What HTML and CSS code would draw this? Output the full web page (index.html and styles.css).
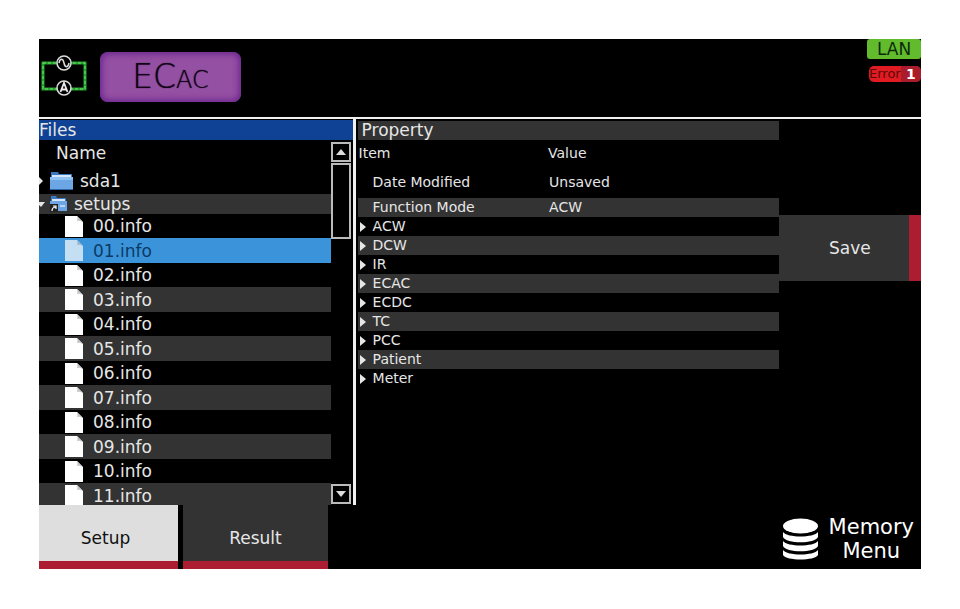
FILE: index.html
```
<!DOCTYPE html>
<html lang="en">
<head>
  <meta charset="UTF-8">
  <meta name="viewport" content="width=device-width, initial-scale=1.0">
  <title>Memory Menu</title>
  <link rel="stylesheet" href="styles.css">
</head>
<body>
  <!-- shared icons -->
  <svg class="defs" width="0" height="0" aria-hidden="true">
    <symbol id="file" viewBox="0 0 18 21">
      <path d="M0 0h12l6 6v15H0z" fill="#fff"/>
      <path d="M12 0c1 3 0 5 0 5s3-1 6 1z" fill="#c4c4c4"/>
    </symbol>
    <symbol id="right" viewBox="0 0 6 10">
      <path d="M0 0l6 5-6 5z" fill="#e6e6e6"/>
    </symbol>
  </svg>

  <div class="screen">
    <header class="topbar">
      <svg class="circuit" width="46" height="44" viewBox="0 0 46 44">
        <rect x="2" y="10" width="42" height="26" fill="none" stroke="#22a52c" stroke-width="3"/>
        <rect x="2" y="10" width="42" height="26" fill="none" stroke="#7be070" stroke-width="1" stroke-dasharray="3 2"/>
        <circle cx="23" cy="10" r="7" fill="#000" stroke="#ddd" stroke-width="1.5"/>
        <path d="M18 10c1-5 4-5 5 0s4 5 5 0" fill="none" stroke="#ddd" stroke-width="1.5"/>
        <circle cx="23" cy="35" r="7" fill="#000" stroke="#ddd" stroke-width="1.5"/>
        <path d="M19.500 39l3.500-9 3.500 9M21 36.500h4" fill="none" stroke="#eee" stroke-width="1.800"/>
      </svg>
      <h1 class="mode">EC<span class="mode-sub">AC</span></h1>
      <div class="status">
        <span class="lan">LAN</span>
        <span class="error">Error<b class="error-count">1</b></span>
      </div>
    </header>

    <main class="content">
      <section class="files">
        <h2 class="files-title">Files</h2>
        <div class="files-body">
          <div class="tree">
            <div class="tree-head">Name</div>
            <div class="folder">
              <svg width="4" height="10" viewBox="0 0 4 10"><path d="M0 1l4 4-4 4z" fill="#e6e6e6"/></svg>
              <svg width="23" height="20" viewBox="0 0 23 20">
                <path d="M1 1h7l1 2h13v5H1z" fill="#3c76bd"/>
                <path d="M2 4h19v2H2z" fill="#d4e6f8"/>
                <path d="M0 6h23v13H0z" fill="#6ca6e4"/>
                <path d="M0 6h23v3H0z" fill="#8fc0f2"/>
                <path d="M0 18h23v1H0z" fill="#2f68ad"/>
              </svg>
              <span>sda1</span>
            </div>
            <div class="folder folder-open">
              <svg class="folder-caret" width="6" height="7" viewBox="0 0 6 7"><path d="M0 1h6l-4 5-2-2z" fill="#e6e6e6"/></svg>
              <svg width="17" height="16" viewBox="0 0 17 16">
                <path d="M1 0h5l1 2h9v3H1z" fill="#3c76bd"/>
                <path d="M2 3h13v2H2z" fill="#d4e6f8"/>
                <path d="M0 5h17v10H0z" fill="#6ca6e4"/>
                <path d="M0 8h8v8H0z" fill="#222"/>
                <path d="M2 15c0-3 1-4 4-4M3 10h3v3" fill="none" stroke="#fff" stroke-width="1.200"/>
                <path d="M10 9h5v2h-5z" fill="#b5d6f7"/>
              </svg>
              <span>setups</span>
            </div>
            <ul class="file-list">
              <li><button class="file"><svg width="18" height="21"><use href="#file"/></svg>00.info</button></li>
              <li><button class="file selected"><svg width="18" height="21"><use href="#file"/></svg>01.info</button></li>
              <li><button class="file"><svg width="18" height="21"><use href="#file"/></svg>02.info</button></li>
              <li><button class="file"><svg width="18" height="21"><use href="#file"/></svg>03.info</button></li>
              <li><button class="file"><svg width="18" height="21"><use href="#file"/></svg>04.info</button></li>
              <li><button class="file"><svg width="18" height="21"><use href="#file"/></svg>05.info</button></li>
              <li><button class="file"><svg width="18" height="21"><use href="#file"/></svg>06.info</button></li>
              <li><button class="file"><svg width="18" height="21"><use href="#file"/></svg>07.info</button></li>
              <li><button class="file"><svg width="18" height="21"><use href="#file"/></svg>08.info</button></li>
              <li><button class="file"><svg width="18" height="21"><use href="#file"/></svg>09.info</button></li>
              <li><button class="file"><svg width="18" height="21"><use href="#file"/></svg>10.info</button></li>
              <li><button class="file"><svg width="18" height="21"><use href="#file"/></svg>11.info</button></li>
            </ul>
          </div>
          <div class="scrollbar">
            <button class="scroll-btn" aria-label="Scroll up"><svg width="10" height="6" viewBox="0 0 10 6"><path d="M0 6l5-6 5 6z" fill="#ddd"/></svg></button>
            <div class="scroll-thumb"></div>
            <button class="scroll-btn scroll-down" aria-label="Scroll down"><svg width="10" height="6" viewBox="0 0 10 6"><path d="M0 0h10L5 6z" fill="#ddd"/></svg></button>
          </div>
        </div>
      </section>

      <section class="property">
        <h2 class="property-title">Property</h2>
        <table class="property-table">
          <thead>
            <tr><th class="item">Item</th><th>Value</th></tr>
          </thead>
          <tbody>
            <tr class="first"><td class="leaf">Date Modified</td><td>Unsaved</td></tr>
            <tr><td class="leaf">Function Mode</td><td>ACW</td></tr>
            <tr><td colspan="2"><button class="group"><svg width="6" height="10"><use href="#right"/></svg>ACW</button></td></tr>
            <tr><td colspan="2"><button class="group"><svg width="6" height="10"><use href="#right"/></svg>DCW</button></td></tr>
            <tr><td colspan="2"><button class="group"><svg width="6" height="10"><use href="#right"/></svg>IR</button></td></tr>
            <tr><td colspan="2"><button class="group"><svg width="6" height="10"><use href="#right"/></svg>ECAC</button></td></tr>
            <tr><td colspan="2"><button class="group"><svg width="6" height="10"><use href="#right"/></svg>ECDC</button></td></tr>
            <tr><td colspan="2"><button class="group"><svg width="6" height="10"><use href="#right"/></svg>TC</button></td></tr>
            <tr><td colspan="2"><button class="group"><svg width="6" height="10"><use href="#right"/></svg>PCC</button></td></tr>
            <tr><td colspan="2"><button class="group"><svg width="6" height="10"><use href="#right"/></svg>Patient</button></td></tr>
            <tr><td colspan="2"><button class="group"><svg width="6" height="10"><use href="#right"/></svg>Meter</button></td></tr>
          </tbody>
        </table>
      </section>

      <aside class="actions">
        <button class="save">Save</button>
      </aside>
    </main>

    <footer class="bottombar">
      <button class="tab active">Setup</button>
      <button class="tab">Result</button>
      <div class="menu-name">
        <svg width="35" height="42" viewBox="0 0 35 42">
          <g fill="#fff">
            <ellipse cx="17.500" cy="8" rx="17.500" ry="7.500"/>
            <path d="M0 14c4 6 31 6 35 0v5c-3 7-32 7-35 0z"/>
            <path d="M0 23c4 6 31 6 35 0v5c-3 7-32 7-35 0z"/>
            <path d="M0 32c4 6 31 6 35 0v5c-3 6-32 6-35 0z"/>
          </g>
        </svg>
        <span>Memory<br>Menu</span>
      </div>
    </footer>
  </div>
</body>
</html>
```
FILE: styles.css
```
* {
  box-sizing: border-box;
}

body {
  margin: 0;
  padding: 39px 39px 40px;
  height: 100vh;
  background-color: #fff;
  color: #e6e6e6;
  font-family: 'DejaVu Sans', sans-serif;
  font-size: 17px;
}

h1, h2, ul {
  margin: 0;
  padding: 0;
  font-weight: normal;
}

button {
  margin: 0;
  padding: 0;
  border: none;
  background: none;
  color: inherit;
  font: inherit;
  cursor: pointer;
}

.defs {
  display: none;
}

.screen {
  display: flex;
  flex-direction: column;
  height: 100%;
  background-color: #000;
  overflow: hidden;
}

/* top bar */
.topbar {
  display: flex;
  align-items: flex-start;
  height: 80px;
  border-bottom: 2px solid #f0f0f0;
}

.circuit {
  margin: 14px 13px 0 2px;
}

.mode {
  width: 141px;
  height: 50px;
  margin-top: 13px;
  border-radius: 8px;
  background-color: #9450a2;
  box-shadow: inset 0 0 6px 2px #6a2390;
  color: #120418;
  font-size: 33px;
  font-weight: 200;
  line-height: 50px;
  text-align: center;
  text-shadow: 0 0 1px #120418;
}

.mode-sub {
  font-size: 24px;
}

.status {
  display: flex;
  flex-direction: column;
  align-items: flex-end;
  gap: 7px;
  margin-left: auto;
}

.lan {
  width: 54px;
  border-radius: 3px;
  background-color: #62bb2c;
  color: #0c2a0a;
  line-height: 20px;
  text-align: center;
}

.error {
  display: flex;
  width: 52px;
  border-radius: 5px;
  background-color: #e01b22;
  color: #5c0808;
  font-size: 13px;
  line-height: 16px;
  overflow: hidden;
}

.error-count {
  flex: 1;
  background-color: #a81c2c;
  color: #fff;
  font-size: 14px;
  text-align: center;
}

/* main area */
.content {
  display: flex;
  flex: 1;
  min-height: 0;
}

.files {
  display: flex;
  flex: 315 1 0;
  flex-direction: column;
  border-right: 3px solid #f0f0f0;
}

.files-title {
  height: 21px;
  border-top: 1px solid #000;
  background-color: #0f4294;
  font-size: 17px;
  line-height: 20px;
}

.files-body {
  display: flex;
  flex: 1;
  min-height: 0;
}

.tree {
  flex: 1;
  overflow: hidden;
}

.tree-head {
  height: 28px;
  padding-left: 17px;
  line-height: 26px;
}

.folder {
  display: flex;
  align-items: center;
  height: 26px;
  gap: 7px;
}

.folder-open {
  height: 20px;
  background-color: #333;
}

.folder-open .folder-caret {
  margin-right: -2px;
}

.file-list {
  list-style: none;
}

.file {
  display: flex;
  align-items: center;
  gap: 10px;
  width: 100%;
  height: 24px;
  padding-left: 26px;
}

li:nth-child(even) .file {
  height: 25px;
  background-color: #333;
}

li:nth-child(even) .selected {
  background-color: #3b94d9;
  color: #0b3a68;
}

.selected svg {
  opacity: 0.7;
}

.scrollbar {
  display: flex;
  flex-direction: column;
  width: 22px;
  padding: 2px 2px 1px 0;
}

.scroll-btn {
  display: flex;
  align-items: center;
  justify-content: center;
  height: 20px;
  border: 2px solid #bbb;
}

.scroll-thumb {
  height: 76px;
  margin-top: 1px;
  border: 2px solid #bbb;
}

.scroll-down {
  margin-top: auto;
}

/* property table */
.property {
  flex: 423 1 0;
  padding-left: 2px;
}

.property-title {
  height: 21px;
  padding-left: 4px;
  border-top: 2px solid #000;
  background-color: #333;
  font-size: 17px;
  line-height: 19px;
}

.property-table {
  width: 100%;
  border-collapse: collapse;
  table-layout: fixed;
  font-size: 14px;
}

.property-table th {
  height: 26px;
  padding: 0 0 0 1px;
  font-weight: normal;
  text-align: left;
}

.property-table .item {
  width: 45%;
}

.property-table td {
  height: 19px;
  padding: 0 0 0 2px;
  line-height: 19px;
}

.property-table .first td {
  height: 32px;
}

.property-table .leaf {
  padding-left: 15px;
}

.property-table tbody tr:nth-child(even) {
  background-color: #333;
}

.group {
  display: flex;
  align-items: center;
  gap: 7px;
  width: 100%;
  height: 19px;
}

/* side actions */
.actions {
  flex: 143 1 0;
  padding-top: 96px;
}

.save {
  width: 100%;
  height: 66px;
  background-color: #333;
  box-shadow: inset -12px 0 #ac1d31;
}

/* bottom bar */
.bottombar {
  display: flex;
  gap: 5px;
  height: 64px;
}

.tab {
  width: 145px;
  padding-top: 2px;
  background-color: #333;
  box-shadow: inset 0 -8px #ac1d31;
}

.tab.active {
  width: 139px;
  padding-right: 6px;
  background-color: #dedede;
  color: #111;
}

.menu-name {
  display: flex;
  align-items: center;
  gap: 11px;
  margin-left: auto;
  padding: 3px 7px 0 0;
  color: #fff;
  font-size: 21px;
  line-height: 24px;
  text-align: center;
}
```
